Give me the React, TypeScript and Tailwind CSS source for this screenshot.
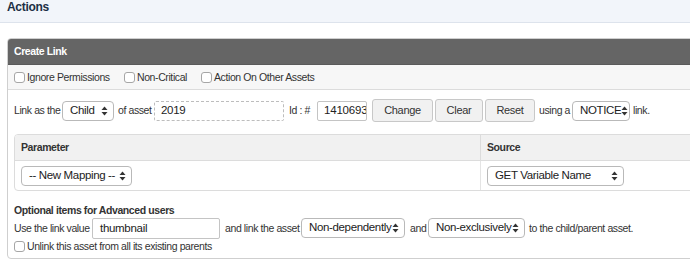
import React from "react";

function Arrows() {
  return (
    <svg width="7" height="10" viewBox="0 0 7 10" className="shrink-0">
      <path d="M3.5 0.5 L6.5 4 L0.5 4 Z" fill="#333" />
      <path d="M3.5 9.5 L6.5 6 L0.5 6 Z" fill="#333" />
    </svg>
  );
}

function Select({ label, w }: { label: string; w: string }) {
  return (
    <div
      className={`${w} flex h-[20px] shrink-0 items-center justify-between overflow-hidden whitespace-nowrap rounded-[4px] border border-[#b9b9b9] bg-white pl-[7px] pr-[5px] text-[11.5px] leading-none tracking-[-0.35px] text-[#222]`}
    >
      <span>{label}</span>
      <Arrows />
    </div>
  );
}

function Check({ label, className = "" }: { label: string; className?: string }) {
  return (
    <label className={`flex shrink-0 items-center whitespace-nowrap ${className}`}>
      <span className="mr-[2px] h-[11px] w-[11px] shrink-0 rounded-[3px] border border-[#a6a6a6] bg-white" />
      <span>{label}</span>
    </label>
  );
}

function Btn({ label, w }: { label: string; w: string }) {
  return (
    <div
      className={`${w} flex h-[23px] shrink-0 items-center justify-center rounded-[3px] border border-[#c8c8c8] bg-[#f1f1f1] text-[11px] tracking-[-0.3px] text-[#333]`}
    >
      {label}
    </div>
  );
}

function Txt({ children, w = "" }: { children: React.ReactNode; w?: string }) {
  return <span className={`${w} shrink-0 whitespace-nowrap`}>{children}</span>;
}

export default function App() {
  return (
    <div className="h-[271px] w-[690px] overflow-hidden bg-white font-['Liberation_Sans',Arial,sans-serif] text-[10.5px] leading-[13px] tracking-[-0.4px] text-[#333]">
      <div className="h-[23px] border-b border-[#dde3ec] bg-[#f2f5fa] pl-[7px] pt-[1px] text-[12px] font-bold leading-[13px] tracking-[-0.3px] text-[#1c2f45]">
        Actions
      </div>

      <div className="ml-[7px] mt-[15px] w-[720px] rounded-[4px] border border-[#cfcfcf]">
        <div className="flex h-[26px] items-center rounded-t-[3px] border-b border-[#5a5a5a] bg-[#656565] pl-[6px] font-bold text-white">
          Create Link
        </div>

        <div className="flex h-[25px] items-center border-b border-[#dcdcdc] bg-[#f7f7f7] pl-[6px]">
          <Check label="Ignore Permissions" className="w-[110px]" />
          <Check label="Non-Critical" className="w-[77px]" />
          <Check label="Action On Other Assets" />
        </div>

        <div className="px-[6px]">
          <div className="mt-[9px] flex h-[23px] items-center">
            <Txt w="w-[48px]">Link as the</Txt>
            <Select label="Child" w="w-[52px]" />
            <Txt w="ml-[4px] w-[36px]">of asset</Txt>
            <div className="flex h-[20px] w-[130px] shrink-0 items-center rounded-[2px] border border-dashed border-[#bdbdbd] pl-[6px] text-[11.5px] tracking-[-0.3px] text-[#222]">
              2019
            </div>
            <Txt w="ml-[5px] w-[28px]">Id : #</Txt>
            <div className="flex h-[20px] w-[50px] shrink-0 items-center overflow-hidden whitespace-nowrap rounded-[2px] border border-[#c4c4c4] pl-[6px] text-[11.5px] tracking-[-0.2px] text-[#222]">
              1410693
            </div>
            <div className="ml-[5px] flex shrink-0 gap-[2px]">
              <Btn label="Change" w="w-[61px]" />
              <Btn label="Clear" w="w-[48px]" />
              <Btn label="Reset" w="w-[50px]" />
            </div>
            <Txt w="ml-[4px] w-[33px]">using a</Txt>
            <Select label="NOTICE" w="w-[58px]" />
            <Txt w="ml-[3px]">link.</Txt>
          </div>

          <div className="mt-[12px] rounded-[4px] border border-[#dcdcdc]">
            <div className="flex h-[26px] items-center rounded-t-[3px] border-b border-[#dcdcdc] bg-[#f1f1f1] font-bold">
              <div className="flex h-full w-[466px] items-center border-r border-[#dcdcdc] pl-[6px]">Parameter</div>
              <div className="pl-[6px]">Source</div>
            </div>
            <div className="flex h-[29px] items-center">
              <div className="flex h-full w-[466px] items-center border-r border-[#e4e4e4] pl-[6px]">
                <Select label="-- New Mapping --" w="w-[111px]" />
              </div>
              <div className="pl-[6px]">
                <Select label="GET Variable Name" w="w-[137px]" />
              </div>
            </div>
          </div>

          <div className="mt-[13px] font-bold">Optional items for Advanced users</div>

          <div className="flex h-[22px] items-center">
            <Txt w="w-[78px]">Use the link value</Txt>
            <div className="flex h-[21px] w-[128px] shrink-0 items-center rounded-[2px] border border-[#c4c4c4] pl-[7px] text-[11.5px] tracking-[-0.3px] text-[#222]">
              thumbnail
            </div>
            <Txt w="ml-[5px] w-[76px]">and link the asset</Txt>
            <Select label="Non-dependently" w="w-[104px]" />
            <Txt w="ml-[5px] w-[18px]">and</Txt>
            <Select label="Non-exclusively" w="w-[97px]" />
            <Txt w="ml-[4px]">to the child/parent asset.</Txt>
          </div>

          <div className="flex h-[14px] items-center">
            <Check label="Unlink this asset from all its existing parents" />
          </div>
          <div className="h-[5px]" />
        </div>
      </div>
    </div>
  );
}
